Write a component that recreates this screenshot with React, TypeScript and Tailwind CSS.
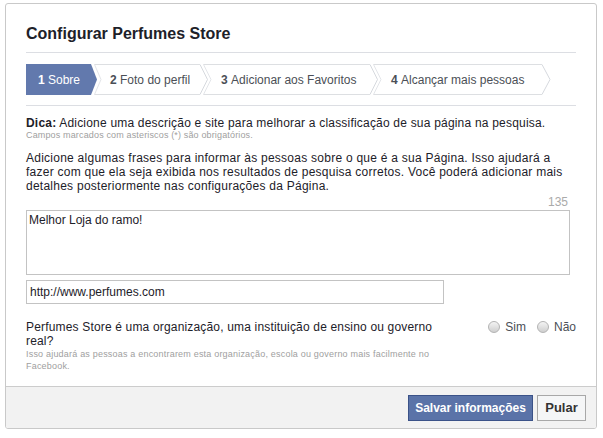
function Sep() {
  return (
    <svg width="12" height="31" viewBox="0 0 12 31" className="shrink-0">
      <path d="M0 0.5 L7.5 15.5 L0 30.5" fill="none" stroke="#d6d9de" />
      <path d="M3.5 0.5 L11 15.5 L3.5 30.5" fill="none" stroke="#e3e5e9" />
      <path d="M3.5 0.5 H12 M3.5 30.5 H12" fill="none" stroke="#dddfe2" />
    </svg>
  );
}

function Radio({ label }: { label: string }) {
  return (
    <label className="flex items-center gap-[5px]">
      <span className="h-[12px] w-[12px] rounded-full border border-[#b3b3b3] bg-gradient-to-b from-[#f4f4f4] to-[#cfcfcf]" />
      <span>{label}</span>
    </label>
  );
}

export default function App() {
  const steps = [
    { n: "2", t: "Foto do perfil", w: "w-[99px]" },
    { n: "3", t: "Adicionar aos Favoritos", w: "w-[158px]" },
    { n: "4", t: "Alcançar mais pessoas", w: "w-[160px]" },
  ];

  return (
    <div className="h-[438px] w-[603px] bg-white pl-[5px] pt-[3px] font-[family-name:Liberation_Sans,Arial,sans-serif] text-[12px] text-[#333]">
      <div className="w-[592px] overflow-hidden rounded-[3px] border border-[#c9c9c9]">
        <div className="px-[20px]">
          <div className="border-b border-[#dcdee3] pb-[8px] pt-[20px] text-[16px] font-bold leading-[20px] text-[#1d2129]">
            Configurar Perfumes Store
          </div>

          {/* wizard steps */}
          <div className="border-b border-[#dcdee3] pb-[10px] pt-[11px]">
            <div className="flex h-[31px] items-stretch text-[12px] text-[#4b4f56]">
              <div className="flex w-[71px] items-center bg-[#6279ad] pl-[12px] text-white [clip-path:polygon(0_0,65px_0,71px_50%,65px_100%,0_100%)]">
                <b>1</b>&nbsp;Sobre
              </div>
              <svg width="4" height="31" viewBox="0 0 4 31" overflow="visible" className="shrink-0">
                <path d="M-2.5 0.5 L4 15.5 L-2.5 30.5" fill="none" stroke="#e3e5e9" />
                <path d="M-2.5 0.5 H4 M-2.5 30.5 H4" fill="none" stroke="#dddfe2" />
              </svg>
              {steps.map((s, i) => (
                <div key={s.n} className="flex">
                  <div className={`flex items-center border-y border-[#dddfe2] pl-[9px] ${s.w}`}>
                    <b>{s.n}</b>&nbsp;{s.t}
                  </div>
                  {i < steps.length - 1 ? (
                    <Sep />
                  ) : (
                    <svg width="9" height="31" viewBox="0 0 9 31" className="shrink-0">
                      <path d="M0 0.5 L8 15.5 L0 30.5" fill="none" stroke="#d6d9de" />
                    </svg>
                  )}
                </div>
              ))}
            </div>
          </div>

          <div className="mt-[10px] whitespace-nowrap leading-[14px] tracking-[0.2px] text-[#1d2129]">
            <b>Dica:</b> Adicione uma descrição e site para melhorar a classificação de sua página na pesquisa.
          </div>
          <div className="text-[9px] leading-[11px] tracking-[0.15px] text-[#a0a0a0]">
            Campos marcados com asteriscos (*) são obrigatórios.
          </div>

          <p className="mt-[10px] whitespace-nowrap leading-[14px] tracking-[0.25px] text-[#1d2129]">
            Adicione algumas frases para informar às pessoas sobre o que é a sua Página. Isso ajudará a
            <br />
            fazer com que ela seja exibida nos resultados de pesquisa corretos. Você poderá adicionar mais
            <br />
            detalhes posteriormente nas configurações da Página.
          </p>

          <div className="mt-[2px] pr-[8px] text-right leading-[14px] text-[#aaa]">135</div>
          <textarea
            defaultValue="Melhor Loja do ramo!"
            className="mt-[1px] block h-[65px] w-[544px] resize-none border border-[#c3c3c3] px-[2px] pt-[2px] text-[12px] leading-[14px] text-[#1d2129] outline-none"
          />
          <input
            defaultValue="http://www.perfumes.com"
            className="mt-[5px] block h-[24px] w-[418px] border border-[#c3c3c3] px-[3px] text-[12px] text-[#1d2129] outline-none"
          />

          <div className="mt-[16px] flex justify-between text-[#1d2129]">
            <div className="w-[440px] whitespace-nowrap">
              <div className="leading-[14px] tracking-[0.17px]">
                Perfumes Store é uma organização, uma instituição de ensino ou governo
                <br />
                real?
              </div>
              <div className="text-[9px] leading-[12px] tracking-[0.2px] text-[#a0a0a0]">
                Isso ajudará as pessoas a encontrarem esta organização, escola ou governo mais facilmente no
                <br />
                Facebook.
              </div>
            </div>
            <div className="flex h-[14px] items-center gap-[11px] text-[#4b4f56]">
              <Radio label="Sim" />
              <Radio label="Não" />
            </div>
          </div>
        </div>

        <div className="mt-[14px] flex justify-end gap-[4px] border-t border-[#cccccc] bg-[#f2f2f2] pb-[7px] pr-[10px] pt-[8px]">
          <button className="h-[26px] w-[125px] border border-[#3b5288] bg-[#5a73a8] text-[12px] font-bold text-white">
            Salvar informações
          </button>
          <button className="h-[26px] w-[49px] border border-[#a8a8a8] bg-[#f5f6f7] text-[13px] font-bold text-[#333]">
            Pular
          </button>
        </div>
      </div>
    </div>
  );
}
